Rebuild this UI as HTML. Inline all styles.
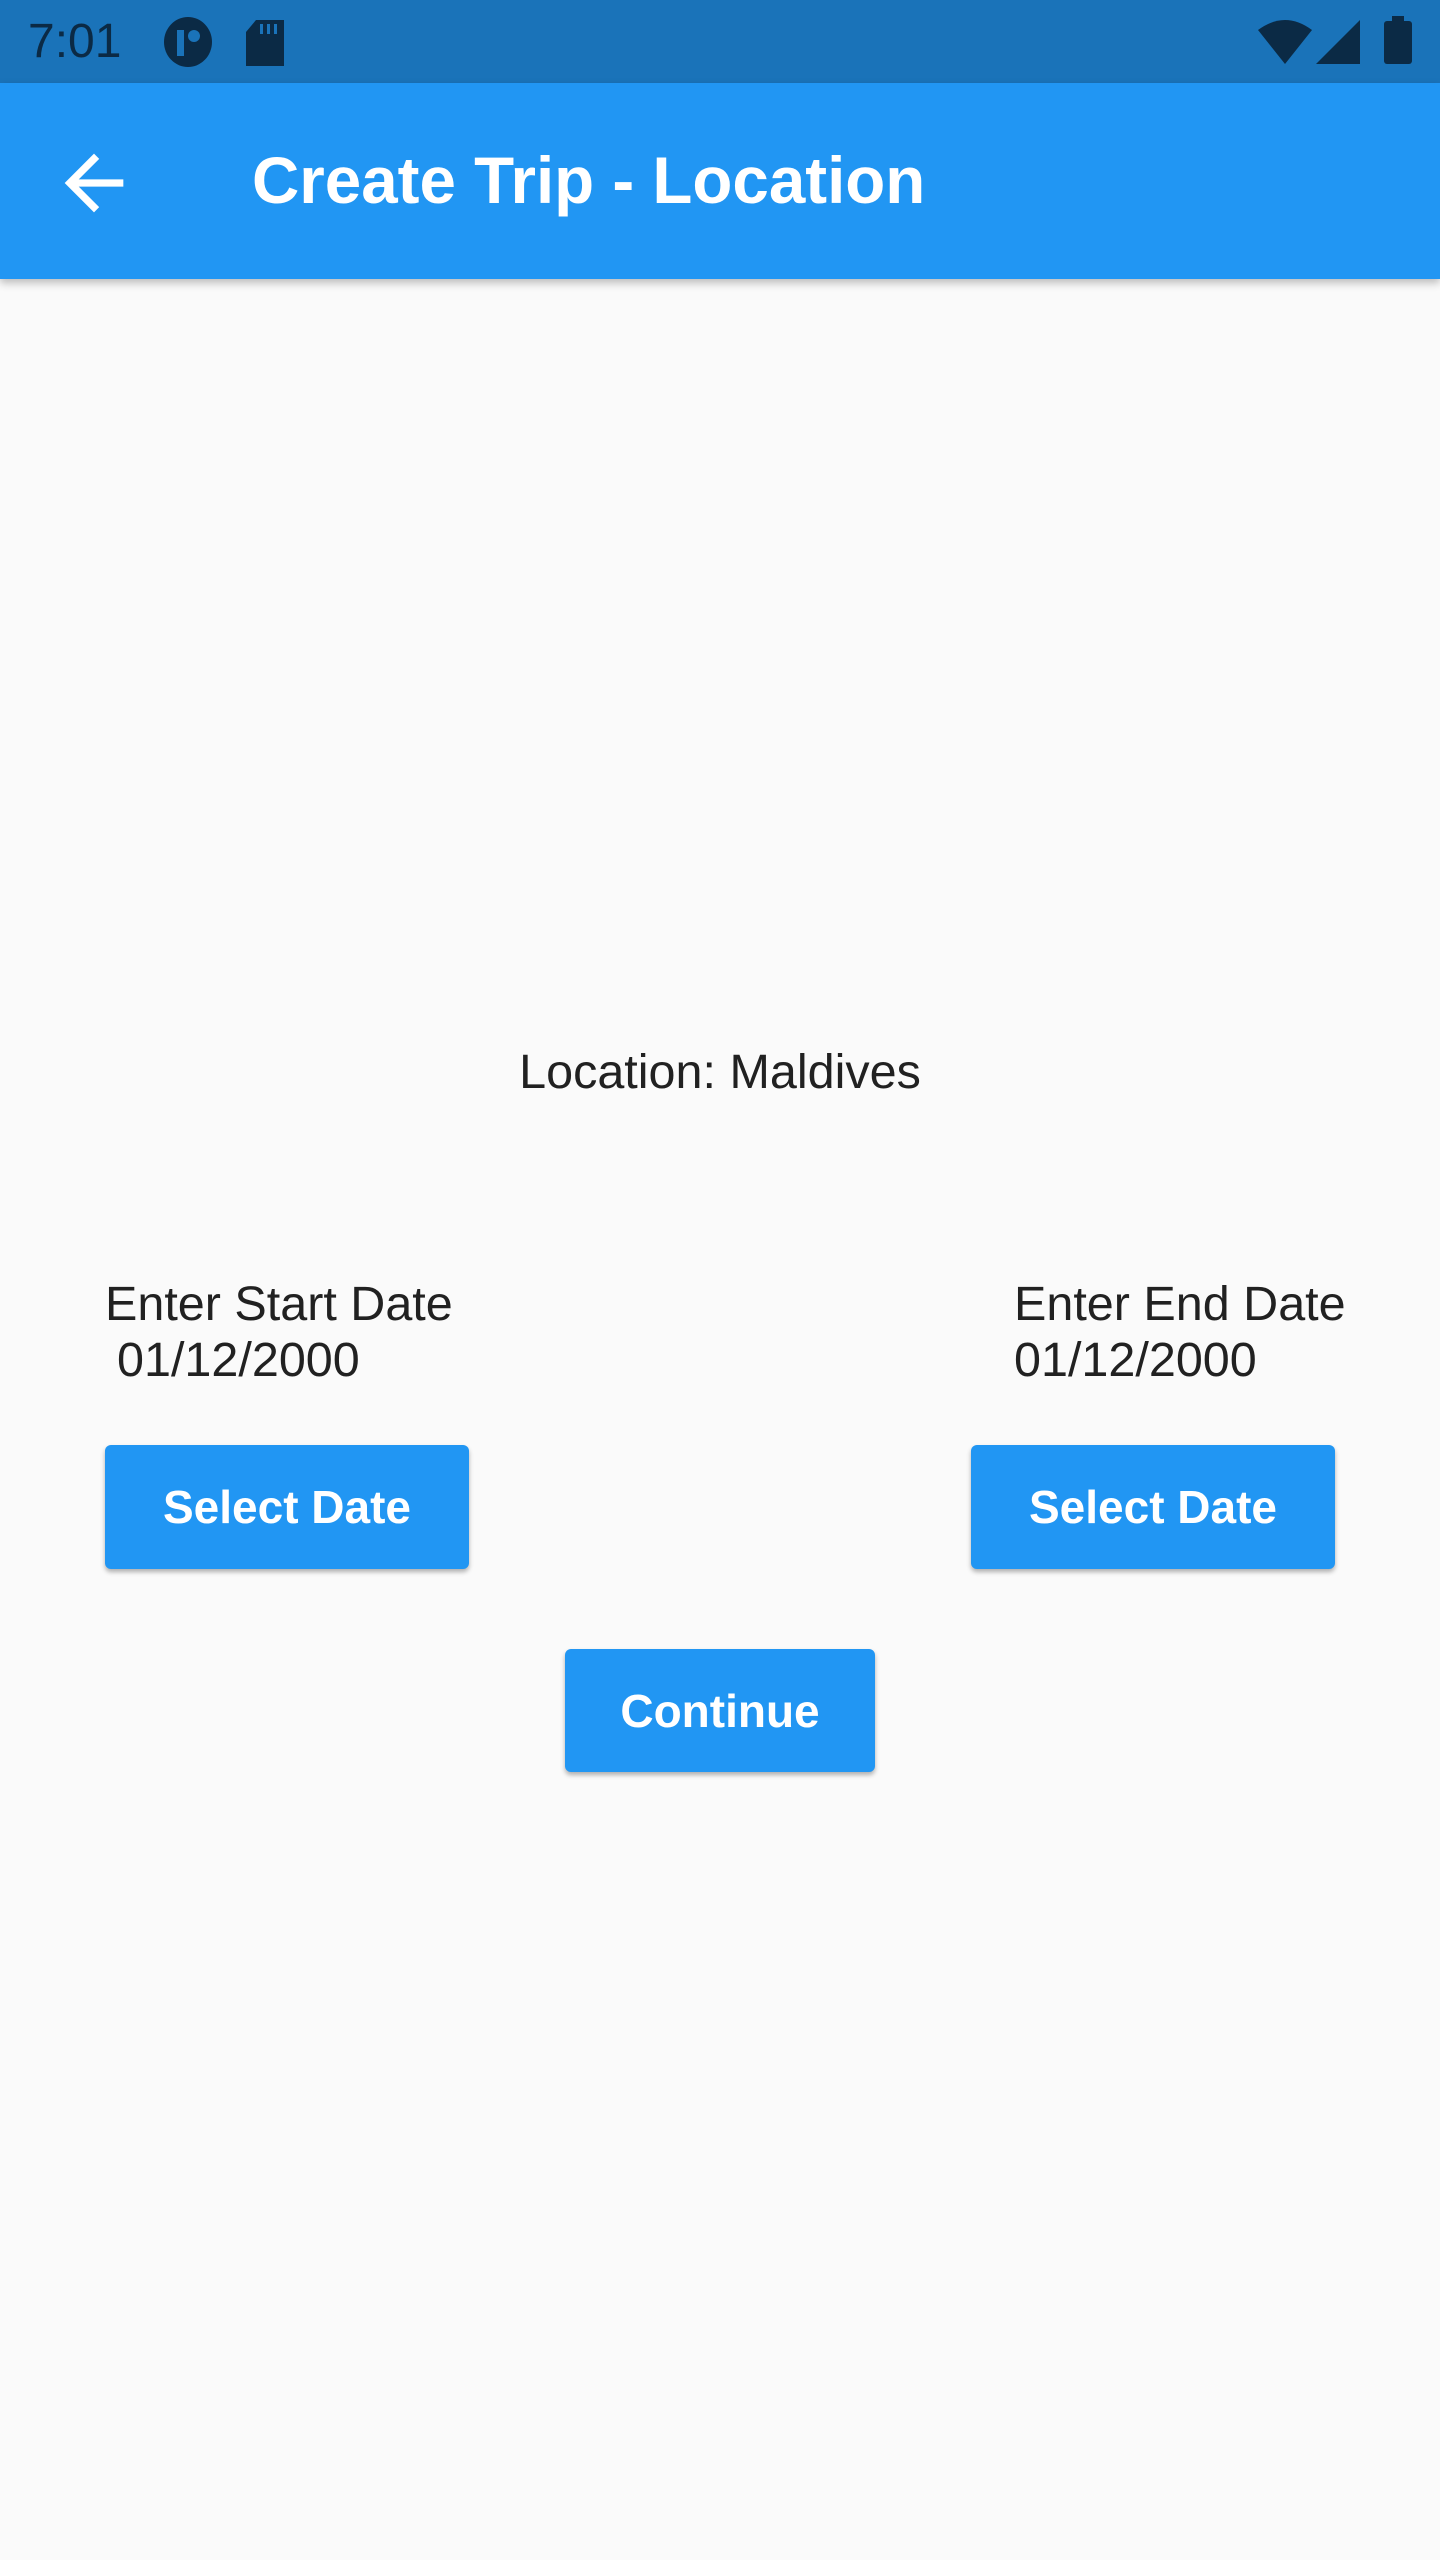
<!DOCTYPE html>
<html><head><meta charset="utf-8"><style>
body{margin:0;width:1440px;height:2560px;background:#fafafa;font-family:"Liberation Sans",sans-serif;position:relative;overflow:hidden}
.sb{position:absolute;left:0;top:0;width:1440px;height:83px;background:#1a73b9}
.ab{position:absolute;left:0;top:83px;width:1440px;height:196px;background:#2196f3;box-shadow:0 4px 8px rgba(0,0,0,.25)}
.t{position:absolute;white-space:nowrap}
.btn{position:absolute;background:#2196f3;color:#fff;font-weight:bold;font-size:46px;border-radius:6px;box-shadow:0 3px 5px rgba(0,0,0,.3);display:flex;align-items:center;justify-content:center}
.body{color:#212121;font-size:48.5px}
</style></head><body>
<div class="sb">
<div class="t" style="left:28px;top:14px;font-size:48px;color:#0b2a45">7:01</div>
<svg style="position:absolute;left:163px;top:16px" width="50" height="52"><ellipse cx="25" cy="26" rx="24" ry="25" fill="#0b2a45"/><rect x="14" y="14" width="7" height="26" fill="#1a73b9"/><circle cx="31" cy="20" r="6" fill="#1a73b9"/></svg>
<svg style="position:absolute;left:246px;top:20px" width="38" height="46"><path d="M10 0H38V46H0V12Z" fill="#0b2a45"/><rect x="14" y="4" width="3" height="10" fill="#1a73b9"/><rect x="21" y="4" width="3" height="10" fill="#1a73b9"/><rect x="28" y="4" width="3" height="10" fill="#1a73b9"/></svg>
<svg style="position:absolute;left:1258px;top:18px" width="54" height="46"><path d="M0 12Q27 -8 54 12L27 46Z" fill="#0b2a45"/></svg>
<svg style="position:absolute;left:1316px;top:20px" width="44" height="44"><path d="M44 0V44H0Z" fill="#0b2a45"/></svg>
<svg style="position:absolute;left:1384px;top:16px" width="28" height="48"><rect x="8" y="0" width="12" height="6" fill="#0b2a45"/><rect x="0" y="5" width="28" height="43" rx="3" fill="#0b2a45"/></svg>
</div>
<div class="ab">
<svg style="position:absolute;left:50px;top:56px" width="88" height="88" viewBox="0 0 24 24"><path d="M20 11H7.83l5.59-5.59L12 4l-8 8 8 8 1.41-1.41L7.83 13H20v-2z" fill="#fff"/></svg>
<div class="t" style="left:252px;top:60px;font-size:65.5px;font-weight:bold;color:#fff">Create Trip - Location</div>
</div>
<div class="t body" style="left:0;width:1440px;text-align:center;top:1044px">Location: Maldives</div>
<div class="t body" style="left:105px;top:1276px">Enter Start Date</div>
<div class="t body" style="left:117px;top:1332px">01/12/2000</div>
<div class="t body" style="left:1014px;top:1276px">Enter End Date</div>
<div class="t body" style="left:1014px;top:1332px">01/12/2000</div>
<div class="btn" style="left:105px;top:1445px;width:364px;height:124px">Select Date</div>
<div class="btn" style="left:971px;top:1445px;width:364px;height:124px">Select Date</div>
<div class="btn" style="left:565px;top:1649px;width:310px;height:123px">Continue</div>
</body></html>
